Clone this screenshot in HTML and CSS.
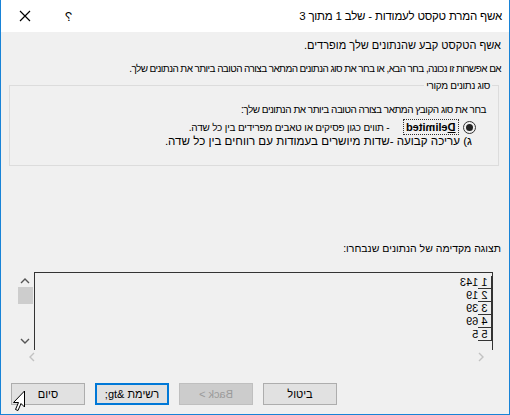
FILE: index.html
```html
<!DOCTYPE html>
<html lang="he">
<head>
  <meta charset="utf-8">
  <title>אשף המרת טקסט לעמודות</title>
  <link rel="stylesheet" href="styles.css">
</head>
<body>
  <div class="dialog" dir="rtl">
    <div class="titlebar">
      <span class="title">אשף המרת טקסט לעמודות - שלב 1 מתוך 3</span>
      <span class="help mirror">?</span>
      <span class="close">
        <svg width="12" height="12" viewBox="0 0 12 12"><path d="M1 1 L11 11 M11 1 L1 11" stroke="#000" stroke-width="1.2" fill="none"/></svg>
      </span>
    </div>

    <div class="content">
      <p class="intro">אשף הטקסט קבע שהנתונים שלך מופרדים.</p>
      <p class="intro small">אם אפשרות זו נכונה, בחר הבא, או בחר את סוג הנתונים המתאר בצורה הטובה ביותר את הנתונים שלך.</p>

      <fieldset class="group">
        <legend>סוג נתונים מקורי</legend>
        <p class="choose">בחר את סוג הקובץ המתאר בצורה הטובה ביותר את הנתונים שלך:</p>
        <div class="option">
          <span class="radio"><span class="dot"></span></span>
          <span class="focus"><span class="mirror"><u>D</u>elimited</span></span>
          <span class="desc">- תווים כגון פסיקים או טאבים מפרידים בין כל שדה.</span>
        </div>
        <div class="fixed">ג) עריכה קבועה -שדות מיושרים בעמודות עם רווחים בין כל שדה.</div>
      </fieldset>

      <p class="preview-label">תצוגה מקדימה של הנתונים שנבחרו:</p>
      <div class="preview-wrap">
        <div class="preview">
          <div class="row"><span class="num mirror">1</span><span class="val mirror">143</span></div>
          <div class="row"><span class="num mirror">2</span><span class="val mirror">19</span></div>
          <div class="row"><span class="num mirror">3</span><span class="val mirror">39</span></div>
          <div class="row"><span class="num mirror">4</span><span class="val mirror">69</span></div>
          <div class="row"><span class="num mirror">5</span><span class="val mirror">5</span></div>
        </div>
        <div class="vscroll">
          <svg width="10" height="6" viewBox="0 0 10 6"><path d="M1 5 L5 1 L9 5" stroke="#555" stroke-width="1.4" fill="none"/></svg>
          <span class="thumb"></span>
          <span class="spacer"></span>
          <svg width="10" height="6" viewBox="0 0 10 6"><path d="M1 1 L5 5 L9 1" stroke="#555" stroke-width="1.4" fill="none"/></svg>
        </div>
      </div>
      <div class="hscroll">
        <svg width="6" height="10" viewBox="0 0 6 10"><path d="M1 1 L5 5 L1 9" stroke="#c2c2c2" stroke-width="1.4" fill="none"/></svg>
        <svg width="6" height="10" viewBox="0 0 6 10"><path d="M5 1 L1 5 L5 9" stroke="#c2c2c2" stroke-width="1.4" fill="none"/></svg>
      </div>
    </div>

    <div class="buttons">
      <button class="btn">ביטול</button>
      <button class="btn disabled"><span class="mirror">&lt; Back</span></button>
      <button class="btn default">רשימת &amp;gt;</button>
      <button class="btn">סיום</button>
    </div>

    <svg class="cursor" width="14" height="22" viewBox="0 0 14 22">
      <path d="M12.5 1 L12.5 17 L9 13.5 L6 20.5 L3.5 19.5 L6.5 12.5 L1.5 12.5 Z" fill="#fff" stroke="#000" stroke-width="1"/>
    </svg>
  </div>
</body>
</html>
```

FILE: styles.css
```css
body {
  margin: 0;
  font-family: "Liberation Sans", "DejaVu Sans", sans-serif;
  color: #000;
}
.dialog {
  position: relative;
  width: 510px;
  height: 415px;
  box-sizing: border-box;
  border: 1px solid #1883d7;
  border-top: none;
  background: #f0f0f0;
  display: flex;
  flex-direction: column;
}
.mirror {
  display: inline-block;
  transform: scaleX(-1);
}
.titlebar {
  height: 32px;
  background: #fff;
  display: flex;
  align-items: center;
  padding: 0 7px 0 18px;
}
.title {
  font-size: 11.5px;
  letter-spacing: -0.2px;
}
.help {
  margin-right: auto;
  margin-left: 34px;
  font-size: 13px;
}
.close {
  display: flex;
}
.content {
  flex: 1;
  padding: 0 8px 0 8px;
}
.intro {
  margin: 7px 0 0;
  font-size: 11px;
}
.intro.small {
  margin-top: 12px;
  font-size: 10px;
  letter-spacing: -0.6px;
}
.group {
  margin: 6px 2px 0 0;
  padding: 2px 12px 18px 10px;
  border: 1px solid #dcdcdc;
  min-width: 0;
}
.group legend {
  font-size: 10px;
  padding: 0 2px;
  margin-right: -6px;
  letter-spacing: -0.3px;
}
.choose {
  margin: 11px 0 0;
  font-size: 10px;
  letter-spacing: -0.5px;
}
.option {
  display: flex;
  align-items: center;
  margin-top: 4px;
  font-size: 10px;
}
.radio {
  width: 11px;
  height: 11px;
  border: 1px solid #333;
  border-radius: 50%;
  display: flex;
  align-items: center;
  justify-content: center;
  margin-left: 4px;
  margin-right: 10px;
}
.dot {
  width: 7px;
  height: 7px;
  border-radius: 50%;
  background: #222;
}
.focus {
  border: 1px dotted #333;
  padding: 1px 2px;
  font-size: 11px;
  font-weight: bold;
}
.desc {
  margin-right: 14px;
  font-size: 10px;
  letter-spacing: -0.2px;
}
.fixed {
  margin-top: -1px;
  margin-right: 14px;
  font-size: 11.6px;
}
.preview-label {
  margin: 76px 0 0;
  font-size: 10.5px;
}
.preview-wrap {
  display: flex;
  margin-top: 18px;
  height: 78px;
}
.preview {
  width: 459px;
  border: 1px solid #333;
  border-bottom: none;
  box-sizing: border-box;
  padding-top: 3px;
  margin-right: 8px;
}
.row {
  display: flex;
  height: 13px;
  font-size: 11px;
  line-height: 13px;
}
.num {
  width: 13px;
  border-left: 1px solid #333;
  border-bottom: 1px solid #333;
  text-align: center;
}
.val {
  padding-right: 1px;
}
.vscroll {
  width: 16px;
  margin-right: 1px;
  display: flex;
  flex-direction: column;
  align-items: center;
  padding-top: 6px;
}
.thumb {
  width: 15px;
  height: 17px;
  background: #cdcdcd;
  margin-top: 3px;
}
.spacer {
  flex: 1;
}
.vscroll svg:last-child {
  margin-bottom: 6px;
}
.hscroll {
  display: flex;
  justify-content: space-between;
  padding: 0 17px 0 0;
  margin-left: 20px;
  margin-top: 2px;
}
.buttons {
  display: flex;
  justify-content: flex-end;
  gap: 10px;
  padding: 0 10px 9px;
}
.btn {
  width: 74px;
  height: 22px;
  background: #e1e1e1;
  border: 1px solid #adadad;
  font-family: "Liberation Sans", "DejaVu Sans", sans-serif;
  font-size: 11px;
  color: #000;
  padding: 0;
}
.btn.default {
  border: 2px solid #0078d7;
}
.btn.disabled {
  background: #cccccc;
  border-color: #bfbfbf;
  color: #9a9a9a;
}
.cursor {
  position: absolute;
  left: 11px;
  bottom: 2px;
}
```
